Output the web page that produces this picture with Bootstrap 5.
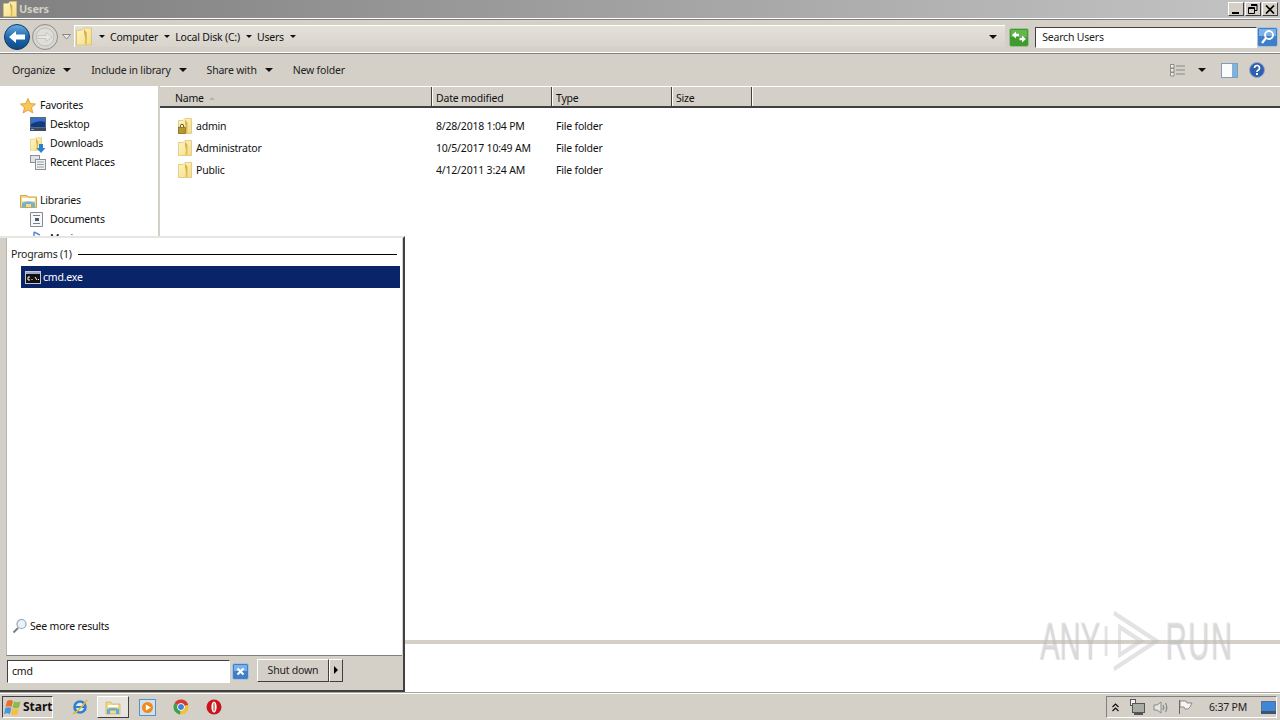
<!DOCTYPE html>
<html lang="en">
<head>
  <meta charset="UTF-8">
  <title>Users</title>
  <link href="https://cdn.jsdelivr.net/npm/bootstrap@5.3.0/dist/css/bootstrap.min.css" rel="stylesheet">
  <style>
    html, body { width: 1280px; height: 720px; overflow: hidden; }
    body { font-family: "Noto Sans", "Liberation Sans", sans-serif; font-size: 10.5px; letter-spacing: -.2px; line-height: 14px; color: #111; background: #d4d0c8; position: relative; }
    svg { display: block; flex: none; }

    .win-shell { width: 1280px; height: 692px; }
    .win-title { height: 18px; background: linear-gradient(90deg, #808080, #c4c4c4); padding: 0 2px 0 3px; }
    .win-title-text { color: #d4d0c8; font-weight: 700; margin-left: 2px; font-size: 11px; }
    .cap-btn { width: 16px; height: 14px; background: #d4d0c8; border: 1px solid; border-color: #fff #404040 #404040 #fff; margin-left: 1px; }

    .addr-row { height: 36px; border-top: 1px solid #fff; border-bottom: 1px solid #808080; box-shadow: inset 0 1px 0 #808080, inset 0 -1px 0 #fff; padding: 0 2px 0 4px; }
    .nudge-down { margin-top: 2px; }
    .nav-fwd { margin-left: 2px; }
    .addr-box { width: 932px; height: 22px; margin-left: 3px; border-left: 1px solid #fff; border-top: 1px solid #fff; padding-left: 1px; background: linear-gradient(#e4e1da, #d8d4cc); }
    .crumb { margin: 0 6px 0 5px; }
    .tri-down { width: 0; height: 0; border-left: 3px solid transparent; border-right: 3px solid transparent; border-top: 3px solid #111; }
    .tri-big { border-left-width: 4px; border-right-width: 4px; border-top-width: 4px; }
    .first-tri { margin-left: 7px; }
    .search-box { width: 222px; height: 21px; margin-left: 6px; background: #fff; border: 1px solid; border-color: #404040 #fff #fff #404040; padding-left: 6px; color: #222; }

    .tool-row { height: 32px; padding: 0 15px 0 12px; }
    .tool-item { margin-right: 20px; color: #222; }
    .tool-item .tri-big { margin-left: 8px; }

    .side-pane { width: 158px; background: #fff; padding-top: 12px; }
    .side-row { height: 19px; padding-left: 50px; position: relative; }
    .side-head { padding-left: 40px; }
    .side-row svg { position: absolute; top: 0; left: 30px; }
    .side-head svg { left: 20px; }
    .side-gap { height: 19px; }
    .split-bar { width: 2px; background: #d4d0c8; }

    .list-pane { background: #fff; }
    .head-row { height: 22px; background: #d4d0c8; border-top: 1px solid #fff; border-bottom: 2px solid #404040; }
    .head-cell { border-right: 1px solid #404040; box-shadow: 1px 0 0 #fff; padding: 4px 0 0 4px; }
    .col-name { width: 272px; padding-left: 15px; }
    .col-date { width: 120px; }
    .col-type { width: 120px; }
    .col-size { width: 80px; }
    .sort-mark { width: 0; height: 0; border-left: 3px solid transparent; border-right: 3px solid transparent; border-bottom: 3px solid #b5b2aa; margin-left: 3px; display: inline-block; vertical-align: 2px; }
    .file-body { padding-top: 7px; }
    .file-row { height: 22px; }
    .file-name { width: 272px; padding-left: 18px; }
    .file-cell { padding-left: 4px; }
    .details-pane { height: 52px; border-top: 4px solid #d4d0c8; background: #fff; flex: none; }

    .start-panel { position: absolute; left: 0; top: 236px; width: 405px; height: 456px; background: #d4d0c8; border-top: 2px solid #e8e6e0; border-right: 2px solid #404040; border-bottom: 2px solid #404040; padding: 0 0 0 6px; }
    .start-results { height: 418px; background: #fff; border-left: 1px solid #b8b5ad; border-bottom: 1px solid #808080; padding: 9px 0 0 4px; margin-right: 1px; }
    .group-head { height: 14px; margin-bottom: 5px; padding-right: 5px; color: #222; }
    .group-rule { height: 1px; background: #000; margin-left: 6px; }
    .pick-row { height: 22px; background: #0a246a; color: #fff; margin-left: 10px; margin-right: 2px; padding-left: 4px; gap: 2px; }
    .results-gap { height: 330px; }
    .more-row { height: 16px; gap: 3px; padding-left: 1px; }
    .start-foot { height: 34px; padding-bottom: 4px; }
    .cmd-input { width: 223px; height: 23px; background: #fff; border: 1px solid; border-color: #404040 #fff #fff #404040; margin-left: 1px; padding-left: 4px; }
    .clear-btn { margin-left: 2px; }
    .shut-btn { width: 72px; height: 23px; margin-left: 8px; margin-bottom: 2px; background: #d4d0c8; border: 1px solid; border-color: #fff #404040 #404040 #fff; color: #222; }
    .shut-arrow { width: 14px; height: 23px; margin-bottom: 2px; background: #d4d0c8; border: 1px solid; border-color: #fff #404040 #404040 #fff; }
    .tri-right { width: 0; height: 0; border-top: 4px solid transparent; border-bottom: 4px solid transparent; border-left: 4px solid #000; }

    .task-bar { height: 28px; background: #d4d0c8; border-top: 1px solid #a8a59d; box-shadow: inset 0 1px 0 #fff; padding: 3px 3px 2px 2px; }
    .start-btn { width: 51px; height: 22px; border: 1px solid; border-color: #404040 #fff #fff #404040; font-weight: 700; font-size: 12px; letter-spacing: 0; gap: 1px; padding-left: 1px; color: #111; }
    .task-app { width: 32px; height: 22px; }
    .task-app.is-open { border: 1px solid; border-color: #fff #404040 #404040 #fff; background: #e6e4df; }
    .tray-box { width: 171px; height: 22px; border: 1px solid; border-color: #808080 #fff #fff #808080; padding-left: 5px; }
    .tray-time { margin-left: 16px; width: 46px; color: #222; }

    .wm-mark { position: absolute; left: 1040px; top: 610px; width: 350px; height: 62px; color: rgba(185, 185, 185, .3); font-family: "Liberation Sans", sans-serif; font-size: 52px; line-height: 62px; letter-spacing: 0; transform: scaleX(.56); transform-origin: left top; text-shadow: 1px 1px 1px rgba(190,190,190,.35); -webkit-text-stroke: 1.5px rgba(200,200,200,.25); }
    .wm-icon { margin: 0 12px 0 5px; }
    .wm-run { letter-spacing: 3px; }
  </style>
</head>
<body>
  <svg width="0" height="0" class="position-absolute">
    <defs>
      <linearGradient id="folderFill" x1="0" y1="0" x2="1" y2="1">
        <stop offset="0" stop-color="#fff6c0"/><stop offset="1" stop-color="#f3dc86"/>
      </linearGradient>
      <linearGradient id="folderFold" x1="0" y1="0" x2="0" y2="1">
        <stop offset="0" stop-color="#cfa94a"/><stop offset="1" stop-color="#e2c25f"/>
      </linearGradient>
      <symbol id="folderIco" viewBox="0 0 14 16">
        <path d="M.5 2.500H5L7 .5H13.500V15.500H.5Z" fill="url(#folderFill)" stroke="#d8bd68" stroke-width=".7"/>
        <path d="M7 1.500L9.500 5V15H7.500Q8.500 9 7 5Z" fill="url(#folderFold)"/>
      </symbol>
    </defs>
  </svg>

  <div class="win-shell d-flex flex-column">
    <div class="win-title d-flex align-items-center">
      <svg width="14" height="16"><use href="#folderIco"/></svg>
      <span class="win-title-text flex-grow-1">Users</span>
      <div class="cap-btn d-flex align-items-end justify-content-center"><svg width="8" height="4"><rect x="0" y="1" width="7" height="2" fill="#000"/></svg></div>
      <div class="cap-btn d-flex align-items-center justify-content-center"><svg width="10" height="10"><path d="M3 .5H9V6.500H7M.5 3.500H6.500V9.500H.5Z M3 1.500H9 M.5 4.500H6.500" fill="none" stroke="#000"/></svg></div>
      <div class="cap-btn d-flex align-items-center justify-content-center"><svg width="10" height="9"><path d="M1 .5L9 8.500M9 .5L1 8.500" stroke="#000" stroke-width="1.700"/></svg></div>
    </div>

    <div class="addr-row d-flex align-items-center">
      <svg class="nudge-down" width="26" height="26" viewBox="0 0 26 26">
        <defs><linearGradient id="backFill" x1="0" y1="0" x2="0" y2="1"><stop offset="0" stop-color="#6aaee0"/><stop offset=".5" stop-color="#1f69ad"/><stop offset="1" stop-color="#0d4a86"/></linearGradient></defs>
        <circle cx="13" cy="13" r="12.500" fill="url(#backFill)" stroke="#0d3a66"/>
        <path d="M5 13L12 7V10.500H21V15.500H12V19Z" fill="#fff"/>
      </svg>
      <svg class="nudge-down nav-fwd" width="26" height="26" viewBox="0 0 26 26">
        <circle cx="13" cy="13" r="12.500" fill="#d8d6d1" stroke="#8e8c86"/>
        <circle cx="13" cy="13" r="9" fill="#e0ded9" stroke="#c0beb8"/>
        <path d="M20 13L14 8.500V11.500H6V14.500H14V17.500Z" fill="#e9e7e3" stroke="#b4b2ac" stroke-width=".6"/>
      </svg>
      <svg class="nudge-down ms-1" width="9" height="6"><path d="M.5 .5H8.500L4.500 5Z" fill="#ece9e3" stroke="#888"/></svg>
      <div class="addr-box d-flex align-items-center">
        <svg width="16" height="19" viewBox="0 0 14 16"><use href="#folderIco"/></svg>
        <div class="tri-down first-tri"></div>
        <span class="crumb">Computer</span>
        <div class="tri-down"></div>
        <span class="crumb">Local Disk (C:)</span>
        <div class="tri-down"></div>
        <span class="crumb">Users</span>
        <div class="tri-down"></div>
        <div class="tri-down tri-big ms-auto me-2"></div>
      </div>
      <svg class="nudge-down ms-1" width="20" height="19" viewBox="0 0 20 19">
        <rect x=".5" y=".5" width="19" height="18" rx="2" fill="#3f9a2f" stroke="#9fbf96"/>
        <rect x="2" y="2" width="16" height="7" fill="#63b64c"/>
        <path d="M3 7L7 3.500V5.800H10V8.200H7V10.500Z M17 11L13 7.500V9.800H10.500V12.200H13V14.500Z" fill="#fff"/>
      </svg>
      <div class="search-box nudge-down d-flex align-items-center">Search Users</div>
      <svg class="nudge-down" width="21" height="20" viewBox="0 0 21 20">
        <rect x=".5" y=".5" width="20" height="19" rx="2" fill="#3f7fc8" stroke="#a9c4e2"/>
        <rect x="2" y="2" width="17" height="7" fill="#7cb0e6"/>
        <circle cx="12" cy="8" r="4" fill="none" stroke="#fff" stroke-width="1.800"/>
        <path d="M9 11L5 16" stroke="#fff" stroke-width="2.200"/>
      </svg>
    </div>

    <div class="tool-row d-flex align-items-center">
      <div class="tool-item d-flex align-items-center">Organize<div class="tri-down tri-big"></div></div>
      <div class="tool-item d-flex align-items-center">Include in library<div class="tri-down tri-big"></div></div>
      <div class="tool-item d-flex align-items-center">Share with<div class="tri-down tri-big"></div></div>
      <div class="tool-item">New folder</div>
      <svg class="ms-auto" width="16" height="13" viewBox="0 0 16 13">
        <path d="M.5 .5H4V4H.5Z M.5 4.500H4V8H.5Z M.5 8.500H4V12H.5Z" fill="#f2efe6" stroke="#8a8a86"/>
        <path d="M6 2H15M6 6H15M6 10H15" stroke="#8a8a86"/>
      </svg>
      <div class="tri-down tri-big" style="margin-left:12px"></div>
      <svg style="margin-left:15px" width="17" height="15" viewBox="0 0 17 15">
        <rect x=".5" y=".5" width="16" height="14" fill="#fbfbfb" stroke="#7f9db9"/>
        <rect x="11" y="1" width="5" height="13" fill="#7fb3de"/>
      </svg>
      <svg style="margin-left:11px" width="16" height="16" viewBox="0 0 16 16">
        <circle cx="8" cy="8" r="7.500" fill="#2e5fb0" stroke="#8fa6c9"/>
        <path d="M5.500 6A2.500 2.500 0 1 1 8.700 8.400Q8 8.800 8 10" fill="none" stroke="#fff" stroke-width="1.700"/>
        <rect x="7" y="11" width="2" height="2" fill="#fff"/>
      </svg>
    </div>

    <div class="d-flex flex-grow-1">
      <div class="side-pane">
        <div class="side-row side-head">
          <svg width="16" height="16" viewBox="0 0 16 16"><path d="M8 .5L10.200 5.600 15.600 6 11.500 9.600 12.800 15 8 12.100 3.200 15 4.500 9.600 .4 6 5.800 5.600Z" fill="#f9c65a" stroke="#e0922a" stroke-width=".8"/></svg>
          Favorites
        </div>
        <div class="side-row">
          <svg width="16" height="14" viewBox="0 0 16 14"><rect x=".5" y=".5" width="15" height="10" fill="#3a70c4" stroke="#5a6a86"/><path d="M1 7Q8 3 15 5V10H1Z" fill="#123a80"/><rect x="0" y="11" width="16" height="3" fill="#3d4a60"/><rect x="1" y="12" width="3" height="1" fill="#7fb0e0"/></svg>
          Desktop
        </div>
        <div class="side-row">
          <svg width="16" height="17" viewBox="0 0 16 17"><svg width="12" height="16" viewBox="0 0 14 16" style="position:static"><use href="#folderIco"/></svg><path d="M9 8H13V12H15.500L11 17 6.500 12H9Z" fill="#2f7fd0"/></svg>
          Downloads
        </div>
        <div class="side-row">
          <svg width="16" height="16" viewBox="0 0 16 16"><rect x=".5" y=".5" width="9" height="7" fill="#dfe3e6" stroke="#8b9094"/><rect x="5.500" y="4.500" width="10" height="10" fill="#eef0f1" stroke="#8b9094"/><path d="M7 7H14M7 9.500H14M7 12H14" stroke="#9aa0a5"/></svg>
          Recent Places
        </div>
        <div class="side-gap"></div>
        <div class="side-row side-head">
          <svg width="17" height="15" viewBox="0 0 17 15"><path d="M.5 2.500H7L8 4H16.500V14.500H.5Z" fill="#f3d98b" stroke="#c9a650"/><rect x="2" y="5" width="13" height="3" fill="#fff"/><path d="M2 14V10Q8.500 7 15 10V14H11V11H6V14Z" fill="#6cb3d6"/></svg>
          Libraries
        </div>
        <div class="side-row">
          <svg width="13" height="15" viewBox="0 0 13 15"><path d="M.5 .5H12.500V14.500H.5Z" fill="#f6f7f8" stroke="#868c92"/><path d="M3 3.500H10M3 11.500H10" stroke="#7a8087"/><rect x="5" y="6" width="4" height="3" fill="#4a5a70"/></svg>
          Documents
        </div>
        <div class="side-row">
          <svg width="12" height="15" viewBox="0 0 12 15"><path d="M4 1V11M4 1L10 4" fill="none" stroke="#5b8fc8" stroke-width="1.500"/></svg>
          Music
        </div>
      </div>
      <div class="split-bar"></div>

      <div class="list-pane flex-grow-1 d-flex flex-column">
        <div class="head-row d-flex">
          <div class="head-cell col-name">Name <span class="sort-mark"></span></div>
          <div class="head-cell col-date">Date modified</div>
          <div class="head-cell col-type">Type</div>
          <div class="head-cell col-size">Size</div>
        </div>
        <div class="file-body flex-grow-1">
          <div class="file-row d-flex align-items-center">
            <div class="file-name d-flex align-items-center">
              <svg width="14" height="16" viewBox="0 0 14 16"><use href="#folderIco"/><rect x=".5" y="9.500" width="7" height="6" fill="#b8962e" stroke="#6e5a18" stroke-width=".6"/><path d="M2.300 9.500V8A1.700 1.700 0 0 1 5.700 8V9.500" fill="none" stroke="#6e5a18"/></svg>
              <span class="ms-1">admin</span>
            </div>
            <div class="file-cell col-date">8/28/2018 1:04 PM</div>
            <div class="file-cell col-type">File folder</div>
          </div>
          <div class="file-row d-flex align-items-center">
            <div class="file-name d-flex align-items-center">
              <svg width="14" height="16"><use href="#folderIco"/></svg>
              <span class="ms-1">Administrator</span>
            </div>
            <div class="file-cell col-date">10/5/2017 10:49 AM</div>
            <div class="file-cell col-type">File folder</div>
          </div>
          <div class="file-row d-flex align-items-center">
            <div class="file-name d-flex align-items-center">
              <svg width="14" height="16"><use href="#folderIco"/></svg>
              <span class="ms-1">Public</span>
            </div>
            <div class="file-cell col-date">4/12/2011 3:24 AM</div>
            <div class="file-cell col-type">File folder</div>
          </div>
        </div>
        <div class="details-pane"></div>
      </div>
    </div>
  </div>

  <div class="task-bar d-flex align-items-center">
    <div class="start-btn d-flex align-items-center">
      <svg width="18" height="17" viewBox="0 0 18 17">
        <path d="M3 2Q6 0 9 2L7.500 8Q4.500 6.500 1.500 8Z" fill="#e8702f"/>
        <path d="M10 2.500Q13 4 16.500 2.500L15 8.500Q12 10 8.500 8.500Z" fill="#8dbb4a"/>
        <path d="M1.300 9Q4.500 7.500 7.300 9L6 15Q3 13.500 0 15Z" fill="#4a96dc"/>
        <path d="M8.300 9.500Q12 11 14.800 9.500L13.500 15.500Q10 17 7 15.500Z" fill="#f3c23b"/>
      </svg>
      Start
    </div>
    <div class="task-app d-flex align-items-center justify-content-center" style="margin-left:11px">
      <svg width="18" height="18" viewBox="0 0 18 18">
        <circle cx="9" cy="9" r="5.500" fill="#dcecf8" stroke="#2f7fd0" stroke-width="2.600"/>
        <path d="M3 9H15" stroke="#2f7fd0" stroke-width="2"/>
        <path d="M2 16Q8 13 16 2" fill="none" stroke="#e5b52f" stroke-width="1.500"/>
      </svg>
    </div>
    <div class="task-app is-open d-flex align-items-center justify-content-center" style="margin-left:1px">
      <svg width="16" height="16" viewBox="0 0 16 16">
        <path d="M1 3H6L7 5H15V15H1Z" fill="#f2d98a" stroke="#c9a650" stroke-width=".6"/>
        <rect x="3" y="6" width="10" height="2" fill="#fff"/>
        <path d="M2 15V10Q8 8 14 10V15H11V11.500H5V15Z" fill="#63add4"/>
      </svg>
    </div>
    <div class="task-app d-flex align-items-center justify-content-center" style="margin-left:2px">
      <svg width="17" height="17" viewBox="0 0 17 17">
        <rect x=".5" y=".5" width="16" height="16" fill="#cfe0f0" stroke="#5c8fc4"/>
        <circle cx="8.500" cy="8.500" r="5.500" fill="#f08a1d"/>
        <path d="M6.800 5.500L12 8.500 6.800 11.500Z" fill="#fff"/>
      </svg>
    </div>
    <div class="task-app d-flex align-items-center justify-content-center" style="margin-left:2px">
      <svg width="16" height="16" viewBox="0 0 16 16">
        <path d="M8 8L1.500 4.200A7.500 7.500 0 0 1 15.200 6Z" fill="#d8392f"/>
        <path d="M8 8L15.200 6A7.500 7.500 0 0 1 7 15.400Z" fill="#f3c22f"/>
        <path d="M8 8L7 15.400A7.500 7.500 0 0 1 1.500 4.200Z" fill="#3da14a"/>
        <circle cx="8" cy="8" r="3.500" fill="#3f80d8" stroke="#fff"/>
      </svg>
    </div>
    <div class="task-app d-flex align-items-center justify-content-center" style="margin-left:1px">
      <svg width="16" height="16" viewBox="0 0 16 16">
        <circle cx="8" cy="8" r="7.500" fill="#c8141c"/>
        <ellipse cx="8" cy="8" rx="2.600" ry="5.600" fill="#fff"/>
        <ellipse cx="8" cy="8" rx="1.100" ry="4.600" fill="#e08a8a"/>
      </svg>
    </div>
    <div class="tray-box d-flex align-items-center ms-auto">
      <svg width="7" height="9" viewBox="0 0 7 9"><path d="M.5 4L3.500 1 6.500 4M.5 8L3.500 5 6.500 8" fill="none" stroke="#111" stroke-width="1.200"/></svg>
      <svg style="margin-left:10px" width="16" height="16" viewBox="0 0 16 16">
        <rect x="1.500" y=".5" width="5" height="6" fill="#f4f4f2" stroke="#555"/>
        <rect x="3.500" y="4.500" width="12" height="9" fill="#a9aca6" stroke="#555"/>
        <rect x="5" y="14" width="9" height="2" fill="#555"/>
      </svg>
      <svg style="margin-left:8px" width="16" height="15" viewBox="0 0 16 15">
        <path d="M1 5H4L8 2V13L4 10H1Z" fill="#e6e6e2" stroke="#8a8a86"/>
        <path d="M10 5Q11.500 7.500 10 10M12.500 3Q15 7.500 12.500 12" fill="none" stroke="#8a8a86" stroke-width="1.200"/>
      </svg>
      <svg style="margin-left:8px" width="16" height="16" viewBox="0 0 16 16">
        <path d="M2.500 1V15" stroke="#666"/>
        <path d="M3 2H9L10 4H15L13 8 11 10H8L7 8H3Z" fill="#f4f4f2" stroke="#777" stroke-width=".8"/>
      </svg>
      <div class="tray-time text-nowrap">6:37 PM</div>
      <svg style="margin-left:6px" width="15" height="13" viewBox="0 0 15 13">
        <rect x=".5" y=".5" width="14" height="10" fill="#3f86d6" stroke="#5b6f8c"/>
        <rect x="0" y="10" width="15" height="3" fill="#40536e"/>
      </svg>
    </div>
  </div>

  <div class="start-panel">
    <div class="start-results">
      <div class="group-head d-flex align-items-center"><span class="text-nowrap">Programs (1)</span><div class="group-rule flex-grow-1"></div></div>
      <div class="pick-row d-flex align-items-center">
        <svg width="16" height="13" viewBox="0 0 16 13">
          <rect x=".5" y=".5" width="15" height="12" fill="#111" stroke="#c8c8c8"/>
          <rect x="1" y="1" width="14" height="2" fill="#9aa7c6"/>
          <path d="M3 6H5M3 6V9H5M7 8V9M10 6L12 9M13 8.500H14" fill="none" stroke="#fff"/>
        </svg>
        <span>cmd.exe</span>
      </div>
      <div class="results-gap"></div>
      <div class="more-row d-flex align-items-center">
        <svg width="15" height="16" viewBox="0 0 15 16">
          <circle cx="9.500" cy="6" r="4.500" fill="#eaf3fa" stroke="#8fa6b8" stroke-width="1.200"/>
          <path d="M6 10L1.500 14.500" stroke="#77808a" stroke-width="2"/>
        </svg>
        <span>See more results</span>
      </div>
    </div>
    <div class="start-foot d-flex align-items-center">
      <div class="cmd-input d-flex align-items-center">cmd</div>
      <svg class="clear-btn" width="17" height="17" viewBox="0 0 17 17">
        <rect x=".5" y=".5" width="16" height="16" rx="2" fill="#3f7fc8" stroke="#a9c4e2"/>
        <rect x="2" y="2" width="13" height="6" fill="#7cb0e6"/>
        <path d="M5.500 5.500L11.500 11.500M11.500 5.500L5.500 11.500" stroke="#fff" stroke-width="2.200"/>
      </svg>
      <div class="shut-btn d-flex align-items-center justify-content-center">Shut down</div>
      <div class="shut-arrow d-flex align-items-center justify-content-center"><div class="tri-right"></div></div>
    </div>
  </div>

  <div class="wm-mark d-flex">
    <span>ANY</span>
    <svg class="wm-icon" width="100" height="62" viewBox="0 0 100 62" preserveAspectRatio="none">
      <path d="M6 16V46M20 3L96 31 20 59" fill="none" stroke="rgba(185,185,185,.4)" stroke-width="5"/>
      <path d="M30 17L68 31 30 45Z" fill="none" stroke="rgba(185,185,185,.4)" stroke-width="5"/>
    </svg>
    <span class="wm-run">RUN</span>
  </div>

  <script src="https://cdn.jsdelivr.net/npm/bootstrap@5.3.0/dist/js/bootstrap.bundle.min.js"></script>
</body>
</html>
